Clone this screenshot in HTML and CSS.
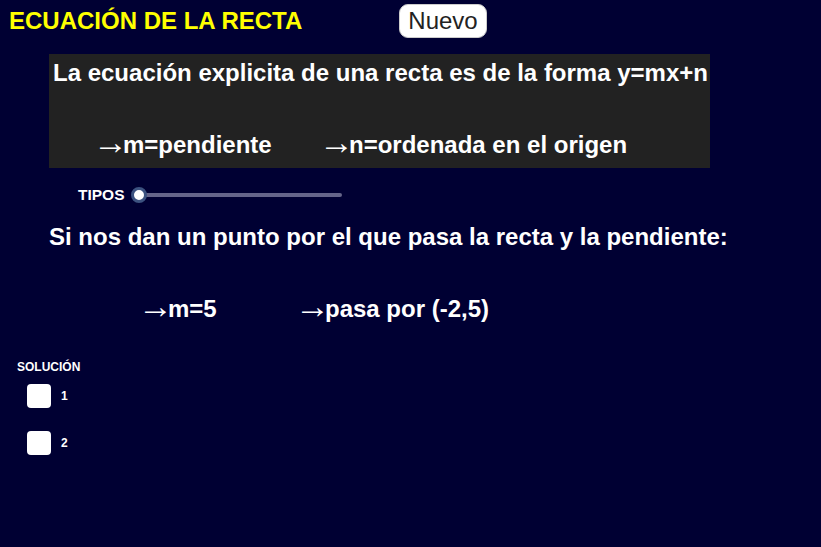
FILE: index.html
```html
<!DOCTYPE html>
<html lang="es">
<head>
<meta charset="utf-8">
<title>Ecuación de la recta</title>
<link rel="stylesheet" href="styles.css">
</head>
<body>
<div class="app">
  <header class="top">
    <h1 class="title">ECUACIÓN DE LA RECTA</h1>
    <button class="btn">Nuevo</button>
  </header>
  <section class="box">
    <p class="box-line">La ecuación explicita de una recta es de la forma y=mx+n</p>
    <p class="box-row"><span class="c1"><span class="arr">→</span>m=pendiente</span><span class="c2"><span class="arr">→</span>n=ordenada en el origen</span></p>
  </section>
  <div class="slider">
    <span class="slider-label">TIPOS</span>
    <div class="track"><span class="knob"></span></div>
  </div>
  <p class="statement">Si nos dan un punto por el que pasa la recta y la pendiente:</p>
  <p class="data"><span class="d1"><span class="arr">→</span>m=5</span><span class="d2"><span class="arr">→</span>pasa por (-2,5)</span></p>
  <div class="solution">
    <div class="sol-title">SOLUCIÓN</div>
    <label class="check"><span class="box-check"></span><span class="num">1</span></label>
    <label class="check"><span class="box-check"></span><span class="num">2</span></label>
  </div>
</div>
</body>
</html>
```
FILE: styles.css
```css
* { box-sizing: border-box; }
html, body {
  margin: 0;
  padding: 0;
  background: #000033;
  height: 100%;
}
body {
  font-family: "Liberation Sans", Arial, sans-serif;
  color: #ffffff;
}
.app {
  width: 821px;
  height: 547px;
  overflow: hidden;
}
.top {
  display: flex;
  align-items: center;
  padding: 4px 0 0 9px;
  height: 38px;
}
.title {
  margin: 0;
  font-size: 24px;
  font-weight: bold;
  color: #ffff00;
  width: 390px;
  line-height: 34px;
}
.btn {
  width: 88px;
  height: 34px;
  border: 1px solid #cccccc;
  border-radius: 9px;
  background: #ffffff;
  color: #222222;
  font-family: "Liberation Sans", Arial, sans-serif;
  font-size: 24px;
  padding: 0;
  line-height: 32px;
}
.box {
  margin: 16px 0 0 49px;
  width: 661px;
  height: 114px;
  background: #222222;
  padding: 5px 0 0 4px;
}
.box-line, .box-row, .statement, .data {
  margin: 0;
  font-size: 24px;
  font-weight: bold;
  line-height: 28px;
  white-space: nowrap;
}
.arr {
  font-family: "Liberation Serif", "DejaVu Serif", serif;
  font-weight: normal;
  font-size: 35px;
  line-height: 0;
  vertical-align: -1px;
  letter-spacing: -5px;
  margin-left: -5px;
}
.box-row {
  margin-top: 44px;
  display: flex;
  padding-left: 45px;
}
.c1 { width: 226px; }
.slider {
  display: flex;
  align-items: center;
  margin: 19px 0 0 78px;
  height: 16px;
}
.slider-label {
  font-size: 15.5px;
  font-weight: bold;
  width: 61px;
}
.track {
  position: relative;
  width: 203px;
  height: 4px;
  background: #65658a;
  border-radius: 2px;
}
.knob {
  position: absolute;
  left: -8px;
  top: -6px;
  width: 16px;
  height: 16px;
  border-radius: 50%;
  background: #ffffff;
  border: 3px solid #3c5280;
}
.statement {
  margin: 20px 0 0 49px;
}
.data {
  margin: 44px 0 0 143px;
  display: flex;
}
.d1 { width: 157px; }
.solution {
  margin: 37px 0 0 17px;
}
.sol-title {
  font-size: 12px;
  font-weight: bold;
  line-height: 14px;
}
.check {
  display: flex;
  align-items: center;
  margin: 10px 0 0 10px;
  height: 24px;
}
.check + .check { margin-top: 23px; }
.box-check {
  width: 24px;
  height: 24px;
  background: #ffffff;
  border-radius: 4px;
}
.num {
  font-size: 12px;
  font-weight: bold;
  margin-left: 10px;
}
```
